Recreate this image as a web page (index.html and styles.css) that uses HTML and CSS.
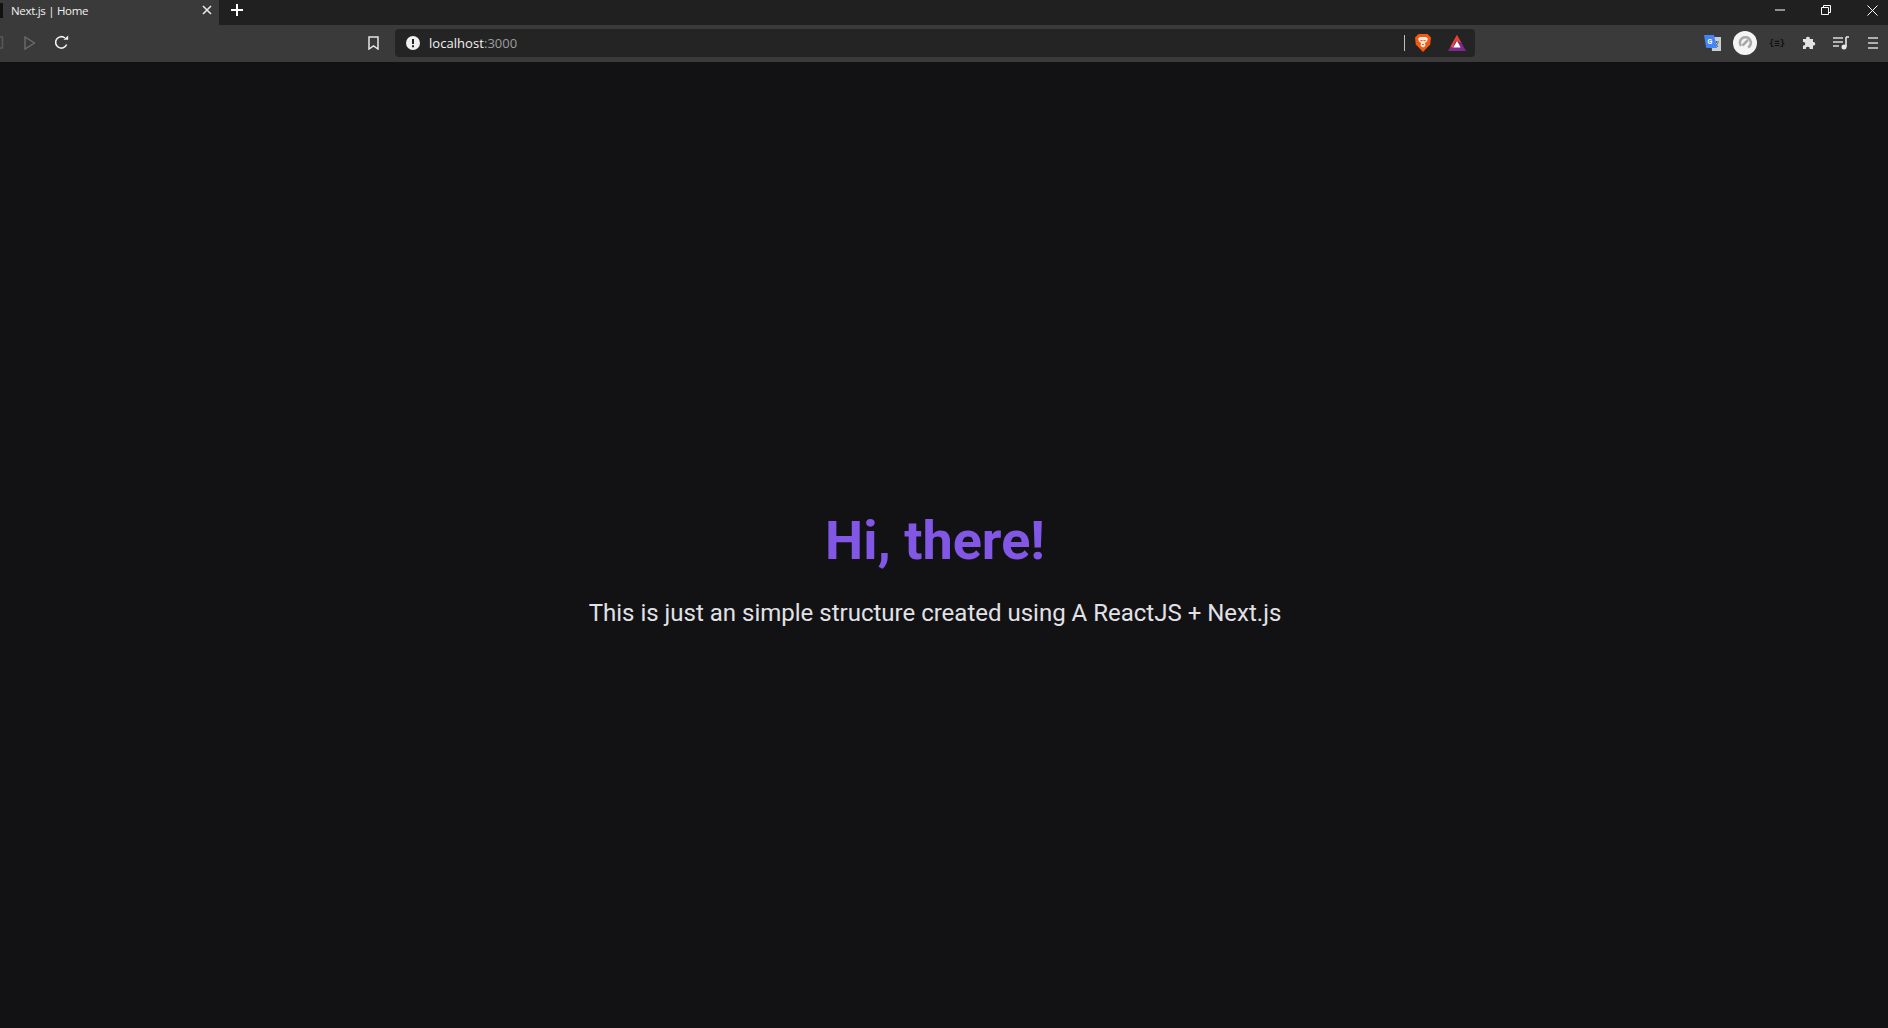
FILE: index.html
```html
<!DOCTYPE html>
<html lang="en">
<head>
    <meta charset="UTF-8">
    <meta name="viewport" content="width=device-width, initial-scale=1.0">
    <title>Next.js | Home</title>
    <link rel="stylesheet" href="styles.css">
</head>
<body>
    <div class="tab-bar">
        <div class="tab">
            <span class="tab-edge"></span>
            <span class="tab-title">Next.js | Home</span>
            <svg class="tab-close" width="10" height="10" viewBox="0 0 10 10"><path d="M1 1l8 8M9 1l-8 8" stroke="#e8e8e8" stroke-width="1.6"/></svg>
        </div>
        <svg class="new-tab" width="12" height="12" viewBox="0 0 12 12"><path d="M6 0v12M0 6h12" stroke="#fff" stroke-width="2"/></svg>
        <div class="window-controls">
            <svg width="10" height="10" viewBox="0 0 10 10"><path d="M0 5h10" stroke="#fff"/></svg>
            <svg width="10" height="10" viewBox="0 0 10 10" fill="none"><path d="M.5 2.500h7v7h-7zM2.500 2.500v-2h7v7h-2" stroke="#fff"/></svg>
            <svg width="11" height="11" viewBox="0 0 11 11"><path d="M.5.5l10 10M10.500.5l-10 10" stroke="#fff"/></svg>
        </div>
    </div>

    <div class="toolbar">
        <div class="nav-buttons">
            <svg class="nav-back" width="4" height="13" viewBox="0 0 4 13" fill="none"><path d="M-2 1h4.500v11H-2" stroke="#5a5a5a" stroke-width="1.500"/></svg>
            <svg class="nav-forward" width="12" height="14" viewBox="0 0 12 14" fill="none"><path d="M1 1l9.500 6L1 13z" stroke="#6e6e6e" stroke-width="1.300"/></svg>
            <svg class="nav-reload" width="15" height="15" viewBox="0 0 15 15" fill="none"><path d="M12.600 9.500A5.700 5.700 0 1 1 11 3" stroke="#f0f0f0" stroke-width="1.600"/><path d="M9.500 4.800h4.700V.5z" fill="#f0f0f0"/></svg>
        </div>
        <svg class="bookmark" width="11" height="14" viewBox="0 0 11 14" fill="none"><path d="M1 1h9v12L5.500 10 1 13z" stroke="#e6e6e6" stroke-width="1.500"/></svg>
        <div class="address-bar">
            <svg class="info-icon" width="14" height="14" viewBox="0 0 14 14"><circle cx="7" cy="7" r="7" fill="#f0f0f0"/><path d="M6 3h2v5H6zM6 9.200h2v2H6z" fill="#222"/></svg>
            <span class="url"><span class="url-host">localhost</span>:3000</span>
            <span class="address-divider"></span>
            <svg class="brave-icon" width="16" height="18" viewBox="0 0 16 18"><path d="M3.500 0h9L16 3.500l-.8 7L8 18 .8 10.500 0 3.500z" fill="#f4590f"/><path d="M3 4.500L5 3h6l2 1.500-1 3-2 1.500.5 3L8 13.500 5.500 12 6 9 4 7.500z" fill="#f6e6dc"/><path d="M5.500 6h2v1h-2zM8.500 6h2v1h-2zM7 10h2v1H7z" fill="#f4590f"/></svg>
            <svg class="bat-icon" width="18" height="16" viewBox="0 0 18 16"><path d="M9 0l9 16H0z" fill="#7d2a8c"/><path d="M9 0L2.500 11.600 5 13z" fill="#f0492c"/><path d="M9 0l4.500 8L9 6 4.500 8z" fill="#e8432a"/><path d="M9 6l3.700 6.500H5.300z" fill="#fff"/></svg>
        </div>
        <div class="extensions">
            <span class="ext-slot"><svg width="18" height="18" viewBox="0 0 18 18"><path d="M7 3h10v14H8z" fill="#c9ced4"/><path d="M10 8h5M12.500 7v2M11 13l3-4M11 9l3 4" stroke="#5f6368"/><path d="M0 1h10l3 13H2.500l-.6-1.500z" fill="#4285f4"/><text x="3.500" y="10" font-size="7" font-weight="700" font-family="Roboto, sans-serif" fill="#fff">G</text></svg></span>
            <span class="ext-slot"><svg width="24" height="24" viewBox="0 0 24 24" fill="none"><circle cx="12" cy="12" r="12" fill="#f4f4f4"/><path d="M8 15A5.500 5.500 0 1 1 15 16.500" stroke="#a8a8a8" stroke-width="2.500"/><path d="M9.500 14.500L15 9" stroke="#a8a8a8" stroke-width="2.500"/></svg></span>
            <span class="ext-slot ext-devtools">{≡}</span>
            <span class="ext-slot"><svg width="15" height="15" viewBox="0 0 15 15"><path d="M1 4h3.200a1.800 1.800 0 1 1 3.500 0H11v3a1.800 1.800 0 1 1 0 3.500V14H7.500a1.800 1.800 0 1 0-3.500 0H1v-3.500a1.800 1.800 0 1 0 0-3.500z" fill="#e2e2e2"/></svg></span>
            <span class="ext-slot"><svg width="16" height="14" viewBox="0 0 16 14" fill="none"><path d="M0 2h10M0 6h10M0 10h6" stroke="#dcdcdc" stroke-width="1.300"/><path d="M13 1v10M13 1h3" stroke="#e8e8e8" stroke-width="1.600"/><circle cx="11" cy="11" r="2.500" fill="#e8e8e8"/></svg></span>
            <span class="ext-slot"><svg width="10" height="12" viewBox="0 0 10 12"><path d="M0 1h10M0 6h10M0 11h10" stroke="#d6d6d6" stroke-width="1.700"/></svg></span>
        </div>
    </div>

    <main class="page">
        <h1>Hi, there!</h1>
        <p>This is just an simple structure created using A ReactJS + Next.js</p>
    </main>
</body>
</html>
```

FILE: styles.css
```css
* {
    margin: 0;
    padding: 0;
    box-sizing: border-box;
}
html, body {
    height: 100%;
}
body {
    display: flex;
    flex-direction: column;
    font-family: Roboto, sans-serif;
    background-color: #121214;
    overflow: hidden;
}
svg {
    display: block;
    flex-shrink: 0;
}

.tab-bar {
    display: flex;
    align-items: center;
    height: 25px;
    padding-bottom: 5px;
    background-color: #202020;
}
.tab {
    display: flex;
    align-items: center;
    width: 219px;
    height: 25px;
    margin-bottom: -5px;
    padding: 0 7px 5px 0;
    background-color: #3a3a3a;
}
.tab-edge {
    width: 3px;
    height: 15px;
    margin-right: 8px;
    background-color: #111;
}
.tab-title {
    flex: 1;
    font-family: "Open Sans", sans-serif;
    font-size: 11.5px;
    letter-spacing: -0.3px;
    color: #f2f2f2;
}
.new-tab {
    margin-left: 12px;
}
.window-controls {
    display: flex;
    align-items: center;
    gap: 36px;
    margin-left: auto;
    padding-right: 10px;
}

.toolbar {
    display: flex;
    align-items: center;
    height: 37px;
    padding-bottom: 2px;
    background-color: #3a3a3a;
}
.nav-buttons {
    display: flex;
    align-items: center;
    width: 368px;
}
.nav-forward {
    margin-left: 20px;
}
.nav-reload {
    margin-left: 18px;
}
.address-bar {
    display: flex;
    align-items: center;
    width: 1080px;
    height: 28px;
    margin-left: 16px;
    padding: 0 9px 0 11px;
    border-radius: 4px;
    background-color: #242424;
}
.url {
    flex: 1;
    margin-left: 9px;
    font-family: "Open Sans", sans-serif;
    font-size: 13px;
    letter-spacing: 0.05px;
    color: #9d9d9d;
}
.url-host {
    color: #f2f2f2;
}
.address-divider {
    width: 1px;
    height: 16px;
    background-color: #bdbdbd;
}
.brave-icon {
    margin-left: 10px;
}
.bat-icon {
    margin-left: 17px;
}
.extensions {
    display: flex;
    align-items: center;
    margin-left: auto;
    margin-right: -1px;
}
.ext-slot {
    display: flex;
    align-items: center;
    justify-content: center;
    width: 32px;
}
.ext-devtools {
    font-family: "DejaVu Sans Mono", monospace;
    font-size: 9px;
    font-weight: 700;
    color: #111;
}

.page {
    flex: 1;
    display: flex;
    flex-direction: column;
    align-items: center;
    justify-content: center;
    padding: 47px 18px 0 0;
}
h1 {
    font-size: 54px;
    font-weight: 700;
    line-height: 1.2;
    color: #8257e5;
}
p {
    margin-top: 25px;
    font-size: 24px;
    line-height: 1.2;
    color: #e1e1e6;
}
```
